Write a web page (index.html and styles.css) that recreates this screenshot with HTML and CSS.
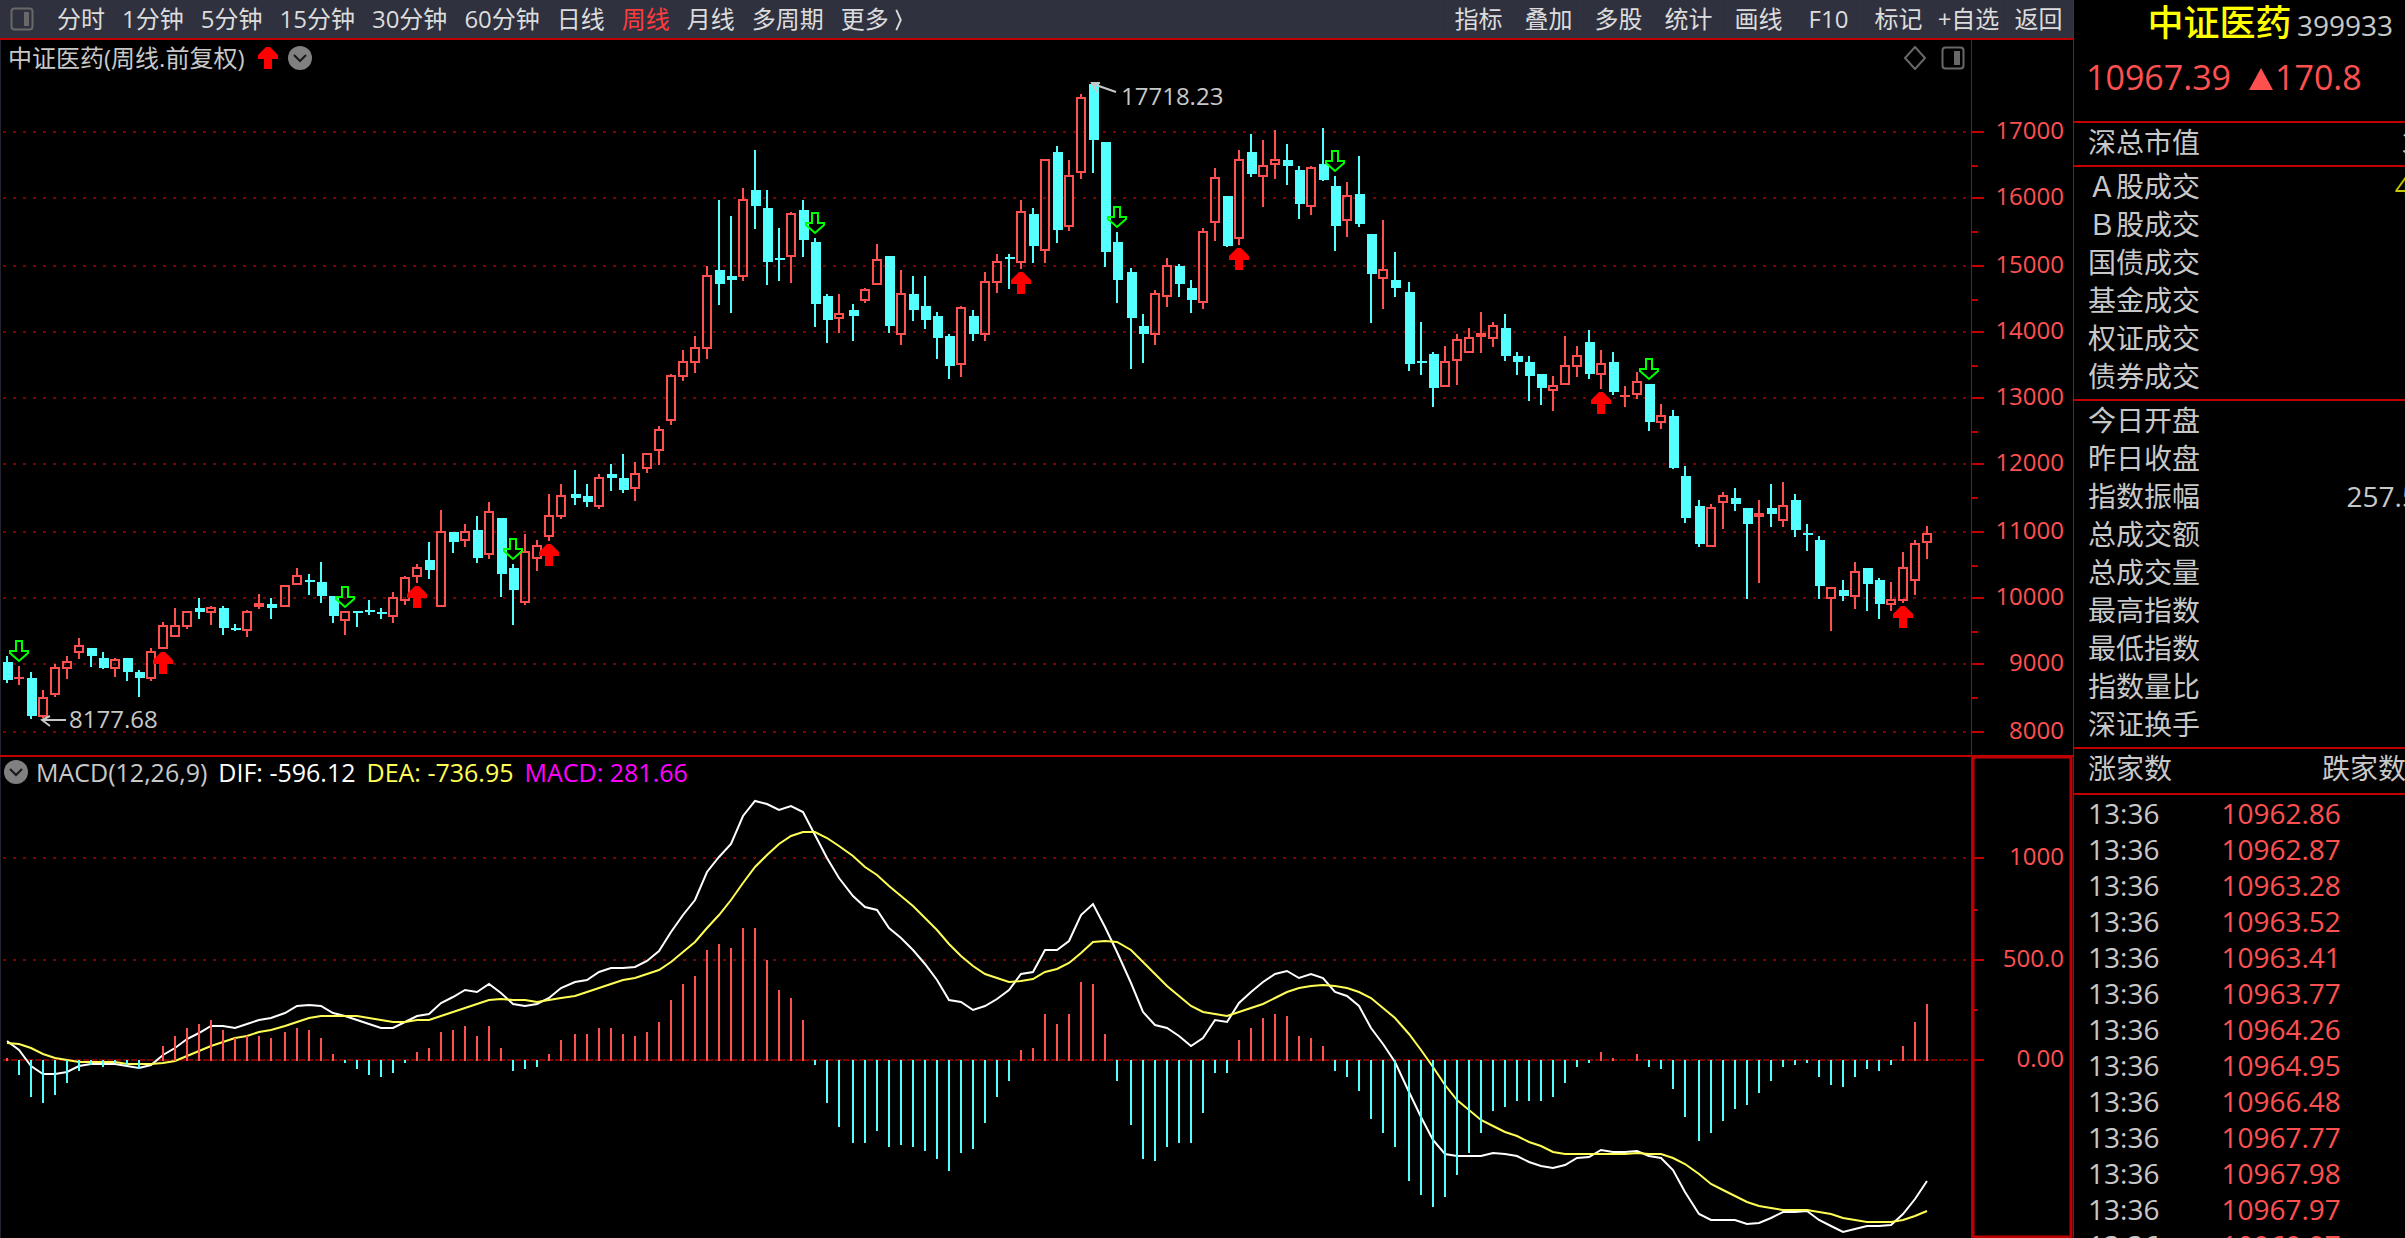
FILE: index.html
```html
<!DOCTYPE html>
<html lang="zh-CN">
<head>
    <meta charset="UTF-8">
    <meta name="viewport" content="width=device-width, initial-scale=1.0">
    <title>中证医药 399933</title>
    <link rel="stylesheet" href="styles.css">
</head>
<body>
    <main class="main">
        <!-- 顶部工具栏 -->
        <nav class="toolbar">
            <div class="periods">
                <button class="icon-btn" aria-label="侧栏">
                    <svg class="icon" viewBox="0 0 24 24"><rect x="1.5" y="1.5" width="21" height="21" rx="3" fill="none" stroke="#686868" stroke-width="2"/><rect x="14" y="5" width="5" height="14" fill="#686868"/></svg>
                </button>
                <button>分时</button>
                <button>1分钟</button>
                <button>5分钟</button>
                <button>15分钟</button>
                <button>30分钟</button>
                <button>60分钟</button>
                <button>日线</button>
                <button class="active">周线</button>
                <button>月线</button>
                <button>多周期</button>
                <button>更多&nbsp;<svg class="more" viewBox="0 0 8 24"><path d="M1 1l5 11-5 11" fill="none" stroke="currentColor" stroke-width="2"/></svg></button>
            </div>
            <div class="tools">
                <button>指标</button>
                <button>叠加</button>
                <button>多股</button>
                <button>统计</button>
                <button>画线</button>
                <button>F10</button>
                <button>标记</button>
                <button>+自选</button>
                <button>返回</button>
            </div>
        </nav>

        <!-- K线图 -->
        <section class="panel price">
            <div class="plot">
                <div class="caption">
                    <span>中证医药(周线.前复权)</span>
                    <svg class="up" viewBox="0 0 20 22"><path d="M8 0h4l8 8v4h-6v10H6V12H0V8z" fill="#ff0000"/></svg>
                    <button class="icon-btn" aria-label="展开">
                        <svg class="icon" viewBox="0 0 24 24"><circle cx="12" cy="12" r="12" fill="#808080"/><path d="M6 9l6 6 6-6" fill="none" stroke="#181818" stroke-width="2"/></svg>
                    </button>
                    <span class="right">
                        <svg class="icon" viewBox="0 0 24 24"><path d="M12 1l10 11-10 11L2 12z" fill="none" stroke="#686868" stroke-width="2"/></svg>
                        <svg class="icon" viewBox="0 0 24 24"><rect x="1.5" y="1.5" width="21" height="21" rx="3" fill="none" stroke="#686868" stroke-width="2"/><rect x="13" y="5" width="6" height="14" fill="#686868"/></svg>
                    </span>
                </div>
                <svg class="chart" id="kline" viewBox="0 76 1971 679" preserveAspectRatio="none"></svg>
            </div>
            <svg class="axis" id="priceAxis" viewBox="0 40 101 715" preserveAspectRatio="none"></svg>
        </section>

        <!-- MACD -->
        <section class="panel macd">
            <div class="plot">
                <div class="caption">
                    <button class="icon-btn" aria-label="展开">
                        <svg class="icon" viewBox="0 0 24 24"><circle cx="12" cy="12" r="12" fill="#808080"/><path d="M6 9l6 6 6-6" fill="none" stroke="#181818" stroke-width="2"/></svg>
                    </button>
                    <span>MACD(12,26,9)</span>
                    <span class="dif">DIF: -596.12</span>
                    <span class="dea">DEA: -736.95</span>
                    <span class="bar">MACD: 281.66</span>
                </div>
                <svg class="chart" id="macd" viewBox="0 791 1971 447" preserveAspectRatio="none"></svg>
            </div>
            <svg class="axis" id="macdAxis" viewBox="0 757 101 481" preserveAspectRatio="none"></svg>
        </section>
    </main>

    <!-- 右侧行情 -->
    <aside class="side">
        <header class="quote">
            <h1>中证医药 <small>399933</small></h1>
            <p class="last"><span>10967.39</span><span><svg class="tri" viewBox="0 0 24 22"><path d="M12 0l12 22H0z" fill="#ff5050"/></svg>170.8</span></p>
        </header>
        <table class="info">
            <tr><th>深总市值</th><td>31</td></tr>
        </table>
        <table class="info">
            <tr><th>Ａ股成交</th><td class="yellow">4.1</td></tr>
            <tr><th>Ｂ股成交</th><td></td></tr>
            <tr><th>国债成交</th><td></td></tr>
            <tr><th>基金成交</th><td></td></tr>
            <tr><th>权证成交</th><td></td></tr>
            <tr><th>债券成交</th><td></td></tr>
        </table>
        <table class="info">
            <tr><th>今日开盘</th><td></td></tr>
            <tr><th>昨日收盘</th><td></td></tr>
            <tr><th>指数振幅</th><td>257.54</td></tr>
            <tr><th>总成交额</th><td></td></tr>
            <tr><th>总成交量</th><td></td></tr>
            <tr><th>最高指数</th><td></td></tr>
            <tr><th>最低指数</th><td></td></tr>
            <tr><th>指数量比</th><td></td></tr>
            <tr><th>深证换手</th><td></td></tr>
        </table>
        <div class="count"><span>涨家数</span><span>跌家数</span></div>
        <table class="ticks">
            <tr><td>13:36</td><td>10962.86</td></tr>
            <tr><td>13:36</td><td>10962.87</td></tr>
            <tr><td>13:36</td><td>10963.28</td></tr>
            <tr><td>13:36</td><td>10963.52</td></tr>
            <tr><td>13:36</td><td>10963.41</td></tr>
            <tr><td>13:36</td><td>10963.77</td></tr>
            <tr><td>13:36</td><td>10964.26</td></tr>
            <tr><td>13:36</td><td>10964.95</td></tr>
            <tr><td>13:36</td><td>10966.48</td></tr>
            <tr><td>13:36</td><td>10967.77</td></tr>
            <tr><td>13:36</td><td>10967.98</td></tr>
            <tr><td>13:36</td><td>10967.97</td></tr>
            <tr><td>13:36</td><td>10969.97</td></tr>
        </table>
    </aside>

    <script src="script.js"></script>
</body>
</html>
```
FILE: styles.css
```css
* {
    box-sizing: border-box;
}
body {
    margin: 0;
    height: 100vh;
    display: flex;
    overflow: hidden;
    background: #000;
    color: #c8c8c8;
    font-family: "Open Sans", "Noto Sans CJK SC", sans-serif;
    font-size: 24px;
    line-height: 36px;
}
button {
    background: none;
    border: none;
    padding: 0;
    margin: 0;
    color: inherit;
    font: inherit;
    white-space: nowrap;
    cursor: pointer;
}
.main {
    flex: 1;
    min-width: 0;
    box-shadow: inset 1px 0 #22242e;
}

/* 工具栏 */
.toolbar {
    display: flex;
    justify-content: space-between;
    height: 40px;
    background: #30313f;
    border-bottom: 2px solid #c00000;
    color: #dcdcdc;
}
.periods {
    display: flex;
    align-items: center;
    gap: 17px;
    padding-left: 10px;
}
.periods .icon-btn {
    margin-right: 6px;
}
.periods .active {
    color: #ff3c3c;
}
.tools {
    display: flex;
}
.tools button {
    width: 70px;
    border-left: 1px solid #a00000;
}
.icon-btn {
    display: flex;
}
.icon {
    width: 24px;
    height: 24px;
}
.more {
    width: 8px;
    height: 22px;
    vertical-align: -3px;
}

/* 图表 */
.panel {
    display: grid;
    grid-template-columns: minmax(0, 1fr) 102px;
}
.price {
    border-bottom: 2px solid #c00000;
}
.caption {
    display: flex;
    align-items: center;
    height: 36px;
    padding-left: 8px;
}
.price .up {
    width: 20px;
    height: 22px;
    margin: 0 10px 0 14px;
}
.caption .right {
    display: flex;
    gap: 14px;
    margin-left: auto;
    padding-right: 6px;
}
.macd .caption {
    height: 34px;
    padding: 0 0 4px 4px;
    gap: 11px;
    font-size: 25px;
}
.macd .icon-btn {
    margin-right: -3px;
}
.dif {
    color: #fff;
}
.dea {
    color: #ffff54;
}
.bar {
    color: #f0f;
}
.chart {
    display: block;
    width: 100%;
    height: 679px;
}
.macd .chart {
    height: 447px;
}
.axis {
    display: block;
    width: 102px;
    height: 715px;
    border-left: 1px solid #b00000;
}
.macd .axis {
    height: 481px;
}
.axis text {
    fill: #ff5050;
    text-anchor: end;
}
.chart text {
    fill: #c8c8c8;
}
.grid {
    stroke: #800000;
    stroke-width: 2;
    stroke-dasharray: 3 7;
    shape-rendering: crispEdges;
}
.zero {
    stroke: #800000;
    stroke-width: 2;
    stroke-dasharray: 6 2;
    shape-rendering: crispEdges;
}
.tick {
    stroke: #c00000;
    stroke-width: 2;
    fill: none;
}
.frame {
    stroke: #c00000;
    stroke-width: 3;
    fill: none;
}
.rise {
    stroke: #ff5050;
    fill: none;
}
.fall {
    stroke: #54ffff;
    fill: none;
}
.fall-body {
    fill: #54ffff;
}
.buy {
    fill: #ff0000;
}
.sell {
    stroke: #00ff00;
    fill: none;
}
.pointer {
    stroke: #c8c8c8;
    stroke-width: 2;
    fill: none;
}
.line-dif {
    stroke: #fff;
    fill: none;
}
.line-dea {
    stroke: #ffff54;
    fill: none;
}

/* 右侧行情 */
.side {
    width: 332px;
    overflow: hidden;
    border-left: 1px solid #c00000;
    font-size: 28px;
    line-height: 38px;
    white-space: nowrap;
}
.quote {
    height: 123px;
    border-bottom: 2px solid #c00000;
}
.quote h1 {
    margin: 0;
    padding: 0 12px 0 0;
    text-align: right;
    color: #ff0;
    font-size: 36px;
    font-weight: 500;
    line-height: 46px;
}
.quote small {
    color: #c8c8c8;
    font-size: 28px;
    font-weight: normal;
    margin-left: -4px;
}
.last {
    display: flex;
    gap: 18px;
    margin: 0;
    padding: 6px 12px;
    color: #ff5050;
    font-size: 34px;
    line-height: 46px;
}
.tri {
    width: 24px;
    height: 22px;
    margin-right: 2px;
}
table {
    border-collapse: separate;
    border-spacing: 0;
}
.info {
    width: 374px;
    border-bottom: 2px solid #c00000;
}
.info th, .info td {
    height: 38px;
    padding: 0 14px;
    font-weight: normal;
    text-align: left;
}
.info td {
    text-align: right;
}
.info tr:last-child th, .info tr:last-child td {
    height: 42px;
    padding-bottom: 4px;
}
.info .yellow {
    color: #c8c800;
}
.count {
    display: flex;
    gap: 150px;
    height: 46px;
    padding-left: 14px;
    border-bottom: 2px solid #c00000;
}
.ticks td {
    height: 36px;
    padding: 0 0 0 14px;
    line-height: 36px;
}
.ticks td + td {
    padding-left: 62px;
    color: #ff5050;
}
```
FILE: script.js
```js
// 每根K线: [涨/跌, 最高, 实体上沿, 实体下沿, 最低]，单位为绘图格 (1格 = 2px)
const R = 1, F = 0;
const candles = [
    [F,328,331,340,341.5],[R,333,339,339,342.5],[F,336,339,358,359.5],[R,345,349,358,359],[R,332,334,347,348.5],
    [R,328,331,334,339.5],[R,319,323,326,329.5],[F,324,324,328,333.5],[F,326,329,334,334.5],[R,329,330,334,338.5],
    [F,329,329,336,340.5],[F,335,336,339,348.5],[R,324,326,339,340.5],[R,311,313,324,324],[R,304,313,318,318],
    [R,306,306,313,314.5],[F,299,304,306,309.5],[R,303,304,306,312.5],[F,303,304,314,317.5],[F,312,314,315,315.5],
    [R,305,306,315,318.5],[R,297,302,303,304.5],[F,299,302,304,309.5],[R,293,293,303,303],[R,284,288,292,292],
    [F,287,290,291,297.5],[F,281,291,298,301.5],[F,298,298,308,311.5],[R,306,306,310,317.5],[F,305.5,305.5,306.5,313.5],
    [F,300,305,306,307.5],[F,304,306,307,309.5],[R,296,299,308,311.5],[R,288,289,300,302.5],[R,282,284,288,291.5],
    [F,271,280,285,289.5],[R,255,266,303,303],[F,266,266,271,276.5],[R,262,266,270,273.5],[F,258,265,279,281.5],
    [R,251,256,277,279.5],[F,259,259,287,298.5],[F,282,284,295,312.5],[R,267,276,301,302.5],[R,270,273,279,285.5],
    [R,247,258,268,270.5],[R,242,248,258,259.5],[F,235,247,249,252.5],[F,242,248,251,253.5],[R,237,239,253,254.5],
    [F,232,237,239,245.5],[F,227,239,245,246.5],[R,231,237,244,250.5],[R,227,227,234,236.5],[R,213,215,225,232.5],
    [R,187,188,210,212.5],[R,175,181,188,190.5],[R,168,174,181,186.5],[R,133,138,174,179.5],[F,100,135,142,152.5],
    [F,108,138,140,156.5],[R,94,100,138,140.5],[F,75,95,103,114.5],[F,95,104,131,142.5],[F,114,129,130,140.5],
    [R,106,107,128,141.5],[F,100,105,120,128.5],[F,119,121,152,163.5],[F,147,148,160,171.5],[R,147,157,159,166.5],
    [F,152,155,158,170.5],[R,144,145,150,151.5],[R,122,130,142,142],[F,128,128,163,166.5],[R,135,147,167,172.5],
    [F,138,147,155,160.5],[F,138,153,160,164.5],[F,156,158,169,179.5],[F,167,168,183,189.5],[R,153,154,182,188.5],
    [F,155,158,167,170.5],[R,136,141,167,170.5],[R,127,131,141,146.5],[F,127,128.5,129.5,144.5],[R,100,106,131,134.5],
    [F,104,107,123,131.5],[R,80,80,125,131.5],[F,73,76,115,121.5],[R,80,88,113,115.5],[R,47,49,86,89.5],
    [F,42,42,70,86.5],[F,71,71,126,133.5],[F,116,121,140,151.5],[F,134,136,159,184.5],[F,157,163,167,181.5],
    [R,145,147,167,172.5],[R,129,133,148,153.5],[F,132,133,142,148.5],[F,140,144,150,156.5],[R,114,116,151,154.5],
    [R,84,89,111,120.5],[F,98,98,123,123.5],[R,75,80,119,122.5],[F,67,76,87,88.5],[R,70,83,88,103.5],
    [R,65,80,82,89.5],[F,72,80,83,92.5],[F,83,85,102,109.5],[R,83,84,103,107.5],[F,64,82,90,90.5],
    [F,88,93,113,125.5],[R,91,98,110,118.5],[F,78,97,112,113.5],[F,117,117,137,161.5],[R,110,135,139,154.5],
    [F,126,140,144,148.5],[F,141,146,182,185.5],[F,161,180.5,181.5,187.5],[F,176,177,194,203.5],[R,173,181,193,193],
    [R,167,170,180,192.5],[R,164,169,176,176],[R,156,167,168,176.5],[R,161,163,169,173.5],[F,157,164,178,180.5],
    [F,176,178,181,187.5],[F,178,181,188,200.5],[F,187,187,194,202.5],[R,188,193,195,205.5],[R,168,183,192,192],
    [R,173,178,183,188.5],[F,165,171,187,189.5],[R,175,182,187,194.5],[F,176,181,196,197.5],[R,193,198,198,203.5],
    [R,186,191,197,199.5],[F,192,192,211,215.5],[R,202,208,211,214.5],[F,205,208,234,234.5],[F,233,238,259,261.5],
    [F,250,253,272,273.5],[R,252,254,273,273],[R,246,248,251,264.5],[F,244,249,252,255.5],[F,254,254,262,299.5],
    [R,250,257,258,291.5],[F,242,254,257,263.5],[R,241,253,260,263.5],[F,247,250,265,268.5],[F,262,266.5,267.5,275.5],
    [F,268,270,293,299.5],[R,294,294,299,315.5],[F,290,295,298,300.5],[R,281,286,298,304.5],[F,284,284,292,305.5],
    [F,289,290,302,309.5],[R,291,300,302,305.5],[R,276,284,300,301.5],[R,270,272,290,297.5],[R,263,267,271,279.5]
];

// 买卖信号: [K线序号, 箭头顶端]
const buys = [[13,326],[34,293],[45,272],[84,136],[102,124],[132,196],[157,303]];
const sells = [[1,320],[28,293],[42,269],[67,106],[92,103],[110,75],[136,179]];

// MACD柱端点，零轴在530
const bars = [
    529,537.5,548.5,551.5,547.5,541.5,535.5,532.5,533.5,531.5,532.5,534.5,530,523,518,514,512,510,515,519,
    518,518,519,516,514,515,519,527,531.5,534.5,537.5,538.5,536.5,531.5,526,524,516,515,513,518,
    513,524,535.5,534.5,533.5,527,520,517,517,514,514,517,518,516,511,500,492,488,475,472,
    474,464,464,480,495,499,510,532.5,551.5,563.5,571.5,571.5,565.5,573.5,572.5,573.5,575.5,579.5,585.5,576.5,
    574.5,561.5,548.5,540.5,525,524,507,512,507,491,492,517,540.5,562.5,579.5,580.5,573.5,571.5,571.5,556.5,
    536.5,536.5,520,514,509,507,508,518,519,523,535.5,538.5,545.5,559.5,566.5,573.5,590.5,597.5,603.5,598.5,
    587.5,576.5,566.5,555.5,553.5,550.5,550.5,550.5,548.5,541.5,533.5,531.5,526,529,530,527,533.5,534.5,544.5,558.5,
    570.5,566.5,560.5,554.5,552.5,546.5,540.5,533.5,532.5,531.5,538.5,542.5,543.5,538.5,534.5,535.5,532.5,523,511,502
];
const dif = [
    520.5,525,533,537,537,536,533,532,532,532,533,534,532.5,527.5,524,519.5,516.5,513,513,514,
    512,510,509,506.5,503,502.5,503,506.5,508,510,512,514,514,511,508,507,501.5,498.5,495,496,
    492,496.5,502,503,502,499,494,491,490,486,484,484,483.5,480.5,475.5,466,457.5,450,436,428.5,
    422,408,400.5,402,405,403,406,417.5,429,439,448,453.5,455,464,469,475,482,490,500,501,
    505,503,499.5,495,487,486,475,475,470.5,457.5,452,463.5,476,491.5,506,512.5,514,518,523,519,
    510,511,501.5,496,491,487,485.5,489,487,489,496,498,503,514,522,531,546,558.5,570,577,
    578,578,578,576.5,577,578,581,583,584,582.5,579,578.5,575,576,576,575.5,578,579,585,596,
    607,610,610,610,612,611.5,609,606,606,605.5,610,613,616,614.5,613,613,612.5,607,599.5,590.5
];
const dea = [
    521.5,522,524,527,529,530,531,531,531,531,532,532,532,531.5,530.5,528,525.5,523,521,519,
    518,516,515,513,511,509,508,508,508,508,509,510,511,511,510,510,508,506,504,502,
    500,499.5,500,500,501,500,499,498,496,494,492,490,489,487,485,481,476,471,464,457.5,
    450,441.5,433.5,427.5,422,418,416,416,419,423,428,433.5,437.5,443,448,453,459,465,472,478,
    483,487,489,491,490.5,489.5,486,484.5,481.5,476.5,471,470.5,471,475,481,487,493,498,503,506,
    507,508,506,504,502,499,496,494,493,492.5,493,494,496,499,504,509,517,525,533.5,542.5,
    550,555,560,563,566,568,571,573,576,577,577,577,577,577,577,576.5,577,577,579,582,
    587,592,595,598,601,603,604,605,605,605,606,607,609,610,611,611,611,610,608,605.5
];

function xAt(i) {
    return 3.5 + 6 * i + Math.floor((i + 0.45) / 23.28);
}

function path(cls, d) {
    return `<path class="${cls}" d="${d}"/>`;
}

function gridLine(y, cls) {
    return `<line class="${cls}" x1="3" x2="1968" y1="${y}" y2="${y}"/>`;
}

function drawKline() {
    let rise = '', fall = '', body = '', buy = '', sell = '';
    candles.forEach(([up, hi, top, bot, lo], i) => {
        const x = xAt(i);
        if (up) {
            rise += `M${x} ${hi}V${top}M${x} ${bot}V${lo}M${x - 2.5} ${top}H${x + 2.5}M${x - 2.5} ${bot}H${x + 2.5}M${x - 2} ${top}V${bot}M${x + 2} ${top}V${bot}`;
        } else {
            fall += `M${x} ${hi}V${lo}`;
            body += `M${x - 2} ${top}h5V${bot}h-5z`;
        }
    });
    buys.forEach(([i, y]) => {
        buy += `M${xAt(i) - 1} ${y}h2l4 4v2h-3v5h-4v-5h-3v-2z`;
    });
    sells.forEach(([i, y]) => {
        sell += `M${xAt(i) - 1.5} ${y + 0.5}h3v5h3v1l-4.5 4l-4.5 -4v-1h3z`;
    });
    const lines = [132, 198, 266, 332, 398, 464, 532, 598, 664, 732].map(y => gridLine(y, 'grid')).join('');
    document.getElementById('kline').innerHTML = lines +
        `<g transform="scale(2)">${path('rise', rise)}${path('fall', fall)}${path('fall-body', body)}${path('buy', buy)}${path('sell', sell)}</g>` +
        path('pointer', 'M1116 92L1093 84M1100 83H1092L1097 92') +
        '<text x="1121" y="105">17718.23</text>' +
        path('pointer', 'M66 720H42M50 716L42 720L50 726') +
        '<text x="69" y="728">8177.68</text>';
}

function drawMacd() {
    let rise = '', fall = '';
    bars.forEach((y, i) => {
        if (y < 530) rise += `M${xAt(i)} 530.5V${y}`;
        if (y > 530) fall += `M${xAt(i)} 530V${y}`;
    });
    const toLine = arr => 'M' + arr.map((y, i) => `${xAt(i)} ${y}`).join('L');
    document.getElementById('macd').innerHTML = gridLine(858, 'grid') + gridLine(960, 'grid') + gridLine(1060, 'zero') +
        `<g transform="scale(2)">${path('line-dif', toLine(dif))}${path('line-dea', toLine(dea))}${path('rise', rise)}${path('fall', fall)}</g>`;
}

function drawAxis(id, labels, minor) {
    const major = labels.map(([y, t]) => path('tick', `M0 ${y}h12`) + `<text x="92" y="${y + 7}">${t}</text>`);
    const small = minor.map(y => path('tick', `M0 ${y}h6`));
    document.getElementById(id).innerHTML += major.join('') + small.join('');
}

drawKline();
drawMacd();
drawAxis('priceAxis',
    [[132, '17000'], [198, '16000'], [266, '15000'], [332, '14000'], [398, '13000'], [464, '12000'], [532, '11000'], [598, '10000'], [664, '9000'], [732, '8000']],
    [166, 232, 300, 366, 432, 498, 566, 632, 698]);
document.getElementById('macdAxis').innerHTML = '<rect class="frame" x="1" y="757" width="98" height="480"/>';
drawAxis('macdAxis', [[858, '1000'], [960, '500.0'], [1060, '0.00']], [910, 1010]);
```
